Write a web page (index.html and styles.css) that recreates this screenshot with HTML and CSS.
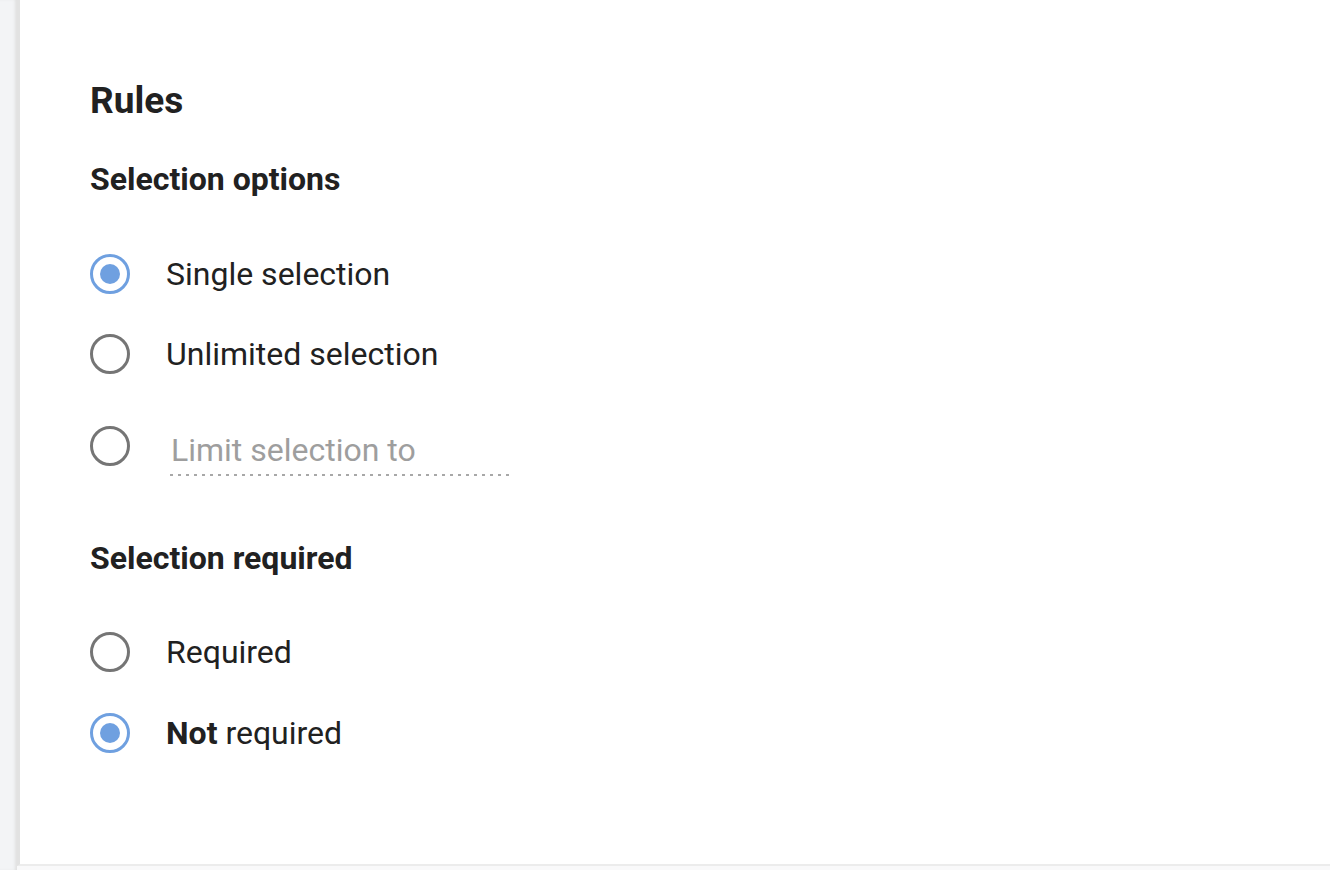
FILE: index.html
```html
<!DOCTYPE html>
<html lang="en">
<head>
<meta charset="utf-8">
<title>Rules</title>
<link rel="stylesheet" href="styles.css">
</head>
<body>
<div class="page">
  <aside class="side"></aside>
  <main class="panel">
    <h1 class="title">Rules</h1>
    <section class="group">
      <h2 class="group-title">Selection options</h2>
      <div class="options">
        <label class="option">
          <span class="radio checked"></span>
          <span class="label">Single selection</span>
        </label>
        <label class="option">
          <span class="radio"></span>
          <span class="label">Unlimited selection</span>
        </label>
        <label class="option option-input">
          <span class="radio"></span>
          <span class="limit">
            <span class="placeholder">Limit selection to</span>
          </span>
        </label>
      </div>
    </section>
    <section class="group group-second">
      <h2 class="group-title">Selection required</h2>
      <div class="options options-second">
        <label class="option">
          <span class="radio"></span>
          <span class="label">Required</span>
        </label>
        <label class="option">
          <span class="radio checked"></span>
          <span class="label"><strong>Not</strong> required</span>
        </label>
      </div>
    </section>
  </main>
</div>
</body>
</html>
```
FILE: styles.css
```css
* { box-sizing: border-box; }
html, body {
  margin: 0;
  padding: 0;
  height: 100%;
}
body {
  background: #f9f9fa;
  font-family: Roboto, "Liberation Sans", Arial, sans-serif;
  color: #212121;
  overflow: hidden;
}
.page {
  display: flex;
  height: 870px;
}
.side {
  width: 17px;
  flex: 0 0 17px;
  background: #f3f4f6;
  box-shadow: inset -3px 0 3px -1px #e0e0e0;
}
.panel {
  flex: 1;
  background: #ffffff;
  height: 866px;
  border-left: 3px solid #e2e2e2;
  border-bottom: 2px solid #ececec;
  padding: 80px 0 0 70px;
}
.title {
  margin: 0;
  font-size: 37px;
  font-weight: 700;
  line-height: 42px;
}
.group { margin-top: 39px; }
.group-second { margin-top: 64px; }
.group-title {
  margin: 0;
  font-size: 32px;
  font-weight: 700;
  line-height: 36px;
}
.options {
  display: flex;
  flex-direction: column;
  gap: 40px;
  margin-top: 57px;
}
.options-second {
  margin-top: 56px;
  gap: 41px;
}
.option {
  display: flex;
  align-items: center;
  gap: 36px;
  min-height: 40px;
}
.radio {
  flex: 0 0 40px;
  width: 40px;
  height: 40px;
  border-radius: 50%;
  border: 3px solid #757575;
  display: flex;
  align-items: center;
  justify-content: center;
}
.radio.checked { border-color: #6fa0e0; }
.radio.checked::after {
  content: "";
  width: 20px;
  height: 20px;
  border-radius: 50%;
  background: #6fa0e0;
}
.label {
  font-size: 32px;
  line-height: 36px;
}
.label strong { font-weight: 700; }
.option-input {
  margin-top: 12px;
  align-items: flex-start;
}
.limit {
  width: 340px;
  margin-left: 4px;
  padding: 6px 0 8px 1px;
  background-image: repeating-linear-gradient(to right, #a8a8a8 0 3px, transparent 3px 8px);
  background-size: 100% 2px;
  background-repeat: no-repeat;
  background-position: left bottom;
}
.placeholder {
  display: block;
  font-size: 32px;
  line-height: 36px;
  color: #9e9e9e;
}
```
